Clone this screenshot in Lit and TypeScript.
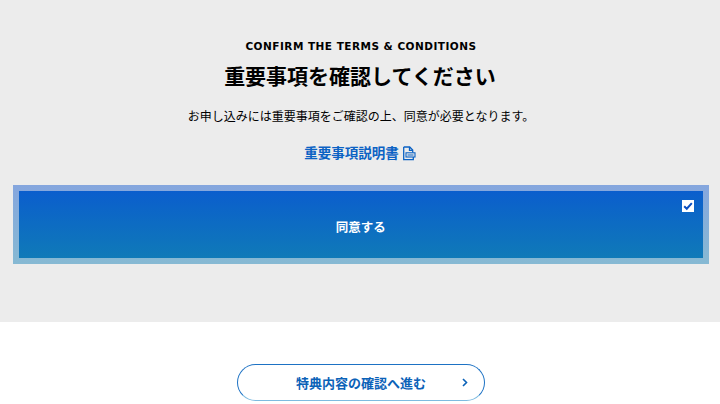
import { LitElement, html, css } from "lit";
import { customElement } from "lit/decorators.js";

@customElement("app-root")
export class AppRoot extends LitElement {
  static styles = css`
    :host {
      display: block;
      width: 720px;
      height: 404px;
      overflow: hidden;
      background: #fff;
      font-family: "DejaVu Sans", "Noto Sans CJK JP", sans-serif;
      color: #000;
    }
    .panel {
      background: #ececec;
      height: 322px;
      box-sizing: border-box;
      padding-top: 39px;
      display: flex;
      flex-direction: column;
      align-items: center;
    }
    .eyebrow {
      font-size: 10.5px;
      font-weight: 700;
      line-height: 14px;
      letter-spacing: 0.48px;
      margin-left: 2px;
    }
    h1 {
      margin: 8px 0 0;
      font-size: 21px;
      font-weight: 700;
      line-height: 32px;
    }
    .lead {
      margin: 15px 0 0 2px;
      font-size: 12px;
      line-height: 18px;
    }
    .doc {
      margin-top: 18px;
      display: flex;
      align-items: center;
      gap: 3px;
      font-size: 13.5px;
      font-weight: 700;
      line-height: 18px;
      color: #0b62c4;
      text-decoration: none;
    }
    .doc svg {
      display: block;
    }
    .agree {
      margin-top: 23px;
      align-self: flex-start;
      margin-left: 13px;
      width: 695.5px;
      height: 79px;
      box-sizing: border-box;
      border: 6px solid transparent;
      padding-top: 4px;
      background: linear-gradient(180deg, #0b5ecd 0%, #0f7ab8 100%) padding-box,
        linear-gradient(180deg, #85a6de 0%, #86b9d3 100%) border-box;
      display: flex;
      align-items: center;
      justify-content: center;
      position: relative;
      color: #fff;
      font-size: 12.5px;
      font-weight: 700;
    }
    .check {
      position: absolute;
      top: 9px;
      right: 9px;
      width: 12px;
      height: 12px;
      background: #fff;
      display: block;
    }
    .footer {
      display: flex;
      justify-content: center;
      padding: 42px 0 0 2px;
    }
    .next {
      width: 248px;
      height: 37px;
      box-sizing: border-box;
      border: 1px solid #1d72c4;
      border-bottom-color: #7dbbe0;
      border-radius: 19px;
      background: #fff;
      display: flex;
      align-items: center;
      justify-content: center;
      position: relative;
      color: #0b62b8;
      font-size: 13px;
      font-weight: 700;
    }
    .chev {
      position: absolute;
      right: 16px;
      top: 13px;
    }
  `;

  render() {
    return html`
      <section class="panel">
        <div class="eyebrow">CONFIRM THE TERMS &amp; CONDITIONS</div>
        <h1>重要事項を確認してください</h1>
        <p class="lead">お申し込みには重要事項をご確認の上、同意が必要となります。</p>
        <a class="doc" href="#">
          <span>重要事項説明書</span>
          <svg width="14" height="15" viewBox="0 0 14 15" fill="none" stroke="#0b62c4" stroke-width="1.3">
            <path d="M1.7 1h6l3 3v2.6M1.7 1v12.6h9.6V11" />
            <path d="M7.5 1v3.3h3.4" />
            <rect x="4" y="6.8" width="9" height="4.2" stroke-width="1.1" />
            <path d="M5.5 9h6" stroke-width="1" />
          </svg>
        </a>
        <div class="agree">
          同意する
          <svg class="check" viewBox="0 0 12 12" fill="none">
            <path d="M2.2 6.2 4.8 8.7 9.8 3.2" stroke="#0b4fc0" stroke-width="2" />
          </svg>
        </div>
      </section>
      <div class="footer">
        <div class="next">
          特典内容の確認へ進む
          <svg class="chev" width="6" height="9" viewBox="0 0 6 9" fill="none">
            <path d="M1 1 4.5 4.5 1 8" stroke="#0b62b8" stroke-width="1.6" />
          </svg>
        </div>
      </div>
    `;
  }
}
